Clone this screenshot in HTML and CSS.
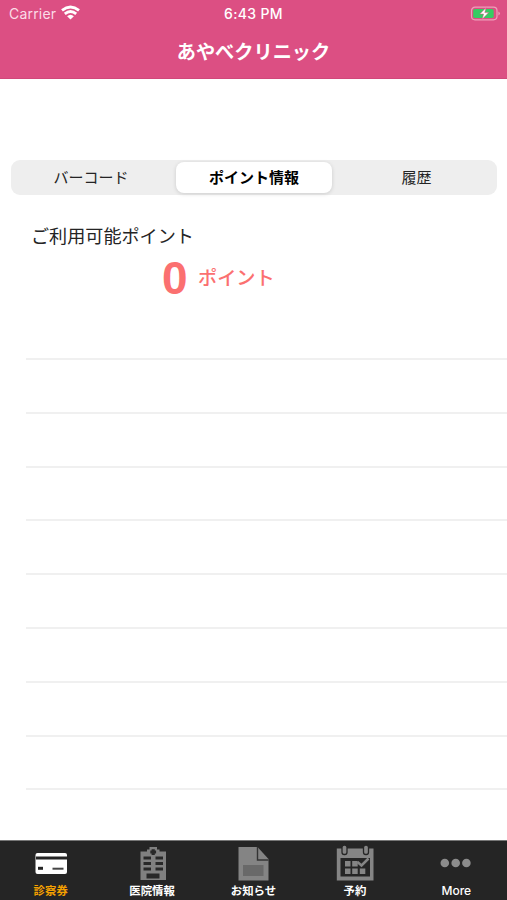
FILE: index.html
```html
<!DOCTYPE html>
<html lang="ja">
<head>
<meta charset="utf-8">
<title>あやべクリニック</title>
<link rel="stylesheet" href="styles.css">
</head>
<body>
<header class="header">
  <div class="status">
    <div class="carrier"><span>Carrier</span>
      <svg class="wifi" width="19" height="15" viewBox="0 0 19 15" fill="none" stroke="#fff" stroke-width="2.8"><path d="M1 5.300Q9.500-1.400 18 5.300M3.800 8.900Q9.500 4.200 15.200 8.900"/><path d="M6.100 11.200Q9.500 8.200 12.900 11.200L9.500 14.500Z" fill="#fff" stroke="none"/></svg>
    </div>
    <div class="time">6:43 PM</div>
    <div class="power">
      <svg width="31" height="15" viewBox="0 0 31 15"><rect x="1.500" y="1.200" width="25.500" height="12.600" rx="3.500" fill="none" stroke="#eda0bb" stroke-width="1.200"/><rect x="3.200" y="3" width="20.500" height="9" rx="1.800" fill="#35cc62"/><path d="M28.400 5.500Q31.500 7.500 28.400 9.500Z" fill="#eda0bb"/><path d="M16 1.800L9.800 8H13.600L12.200 13.200L18.700 6.600H14.800Z" fill="#fff" stroke="#dc4f83" stroke-width=".5"/></svg>
    </div>
  </div>
  <h1 class="title">あやべクリニック</h1>
</header>
<main class="content">
  <nav class="segments">
    <span class="segment first">バーコード</span>
    <span class="segment selected">ポイント情報</span>
    <span class="segment last">履歴</span>
  </nav>
  <section class="points">
    <h2 class="points-label">ご利用可能ポイント</h2>
    <p class="points-value"><strong class="count">0</strong><span class="unit">ポイント</span></p>
  </section>
  <div class="rows">
    <div class="row"></div><div class="row"></div><div class="row"></div><div class="row"></div><div class="row"></div><div class="row"></div><div class="row"></div><div class="row"></div><div class="row"></div>
  </div>
</main>
<footer class="tabs">
  <div class="tab active">
    <svg width="40" height="40" viewBox="0 0 40 40"><rect x="4.500" y="12" width="31.500" height="21" rx="2" fill="#fff"/><path d="M5 17H36" stroke="#252525" stroke-width="3"/><path d="M7 27.300H12" stroke="#252525" stroke-width="3"/><path d="M21.500 27.700H32.500" stroke="#444" stroke-width="2"/></svg>
    <span>診察券</span>
  </div>
  <div class="tab">
    <svg width="40" height="40" viewBox="0 0 40 40"><path d="M8.500 10.500H15V8.500H17.500V6H25V8.500H27.500V10.500H34V39H8.500Z" fill="#808080"/><path d="M21.200 8.200V14M18.300 11H24.100M11.500 17H19M23.500 17H31M11.500 22.500H19M23.500 22.500H31M11.500 28H19M23.500 28H31" stroke="#282828" stroke-width="3.200"/><rect x="14.500" y="32.500" width="13" height="5" fill="#282828"/></svg>
    <span>医院情報</span>
  </div>
  <div class="tab">
    <svg width="40" height="40" viewBox="0 0 40 40"><path d="M5.500 6H24.500L35.500 18V39.500H5.500Z" fill="#848484"/><path d="M24.500 6V19H35.500" fill="none" stroke="#343434" stroke-width="1.400"/><rect x="10" y="24" width="20.500" height="11" fill="#696969"/></svg>
    <span>お知らせ</span>
  </div>
  <div class="tab">
    <svg width="40" height="40" viewBox="0 0 40 40"><path d="M1.800 7.500H38.500V39.500H1.800Z" fill="#858585"/><rect x="5.500" y="17" width="29.500" height="18.500" fill="#252525"/><g stroke="#252525" stroke-width="1.300" fill="#858585"><rect x="7" y="4" width="5" height="9.500" rx="2.300"/><rect x="28.500" y="4" width="5" height="9.500" rx="2.300"/></g><path d="M10 20h5.500v5.500h-5.500zM17.200 20h5.500v5.500h-5.500zM10 27.500h5.500v5.500h-5.500zM17.200 27.500h5.500v5.500h-5.500zM24.800 27.500h5.500v5.500h-5.500z" fill="#858585"/><path d="M22.500 21L26.500 24.500L33.500 17.500" fill="none" stroke="#858585" stroke-width="2.500"/></svg>
    <span>予約</span>
  </div>
  <div class="tab more">
    <svg width="40" height="40" viewBox="0 0 40 40" fill="#8c8c8c"><circle cx="8.800" cy="22" r="4.300"/><circle cx="19.700" cy="22" r="4.300"/><circle cx="30.400" cy="22" r="4.300"/></svg>
    <span>More</span>
  </div>
</footer>
</body>
</html>
```
FILE: styles.css
```css
* { box-sizing: border-box; }
body {
  margin: 0;
  height: 900px;
  display: flex;
  flex-direction: column;
  overflow: hidden;
  background: #fff;
  color: #242424;
  font-family: Inter, "Noto Sans CJK JP", sans-serif;
}
svg { display: block; flex: none; }
.header {
  height: 79px;
  flex: none;
  background: #dc4f83;
  border-bottom: 1px solid #d1487a;
  color: #fff;
}
.status {
  height: 27px;
  display: grid;
  grid-template-columns: 1fr auto 1fr;
  align-items: center;
  padding: 0 6px 0 9px;
  font-size: 14px;
  line-height: 27px;
}
.carrier { display: flex; align-items: center; gap: 5px; color: #fbdce7; letter-spacing: .2px; }
.wifi { margin-top: -2px; }
.time { margin-left: -3px; font-weight: 500; font-size: 14px; letter-spacing: .35px; }
.power { display: flex; justify-content: flex-end; }
.title {
  margin: 0;
  height: 51px;
  line-height: 50px;
  text-align: center;
  font-size: 19.200px;
  font-weight: 700;
}
.content { flex: 1; min-height: 0; padding-top: 81px; }
.segments {
  height: 35px;
  margin: 0 10px 0 11px;
  padding: 2px 3px;
  display: grid;
  grid-template-columns: 161px 157px 1fr;
  background: #eee;
  border-radius: 9px;
}
.segment { text-align: center; font-size: 15px; line-height: 31px; }
.first { padding-right: 7px; }
.last { padding-left: 7px; }
.selected {
  margin-left: 1px;
  background: #fff;
  border-radius: 8px;
  box-shadow: 0 1px 4px rgba(0, 0, 0, .14);
  color: #000;
  font-weight: 700;
}
.points { height: 163px; padding-top: 27px; }
.points-label { margin: 0 0 0 31px; font-size: 18.100px; line-height: 28px; font-weight: 400; }
.points-value {
  display: flex;
  align-items: center;
  height: 56px;
  margin: 0 0 0 162px;
  color: #fb7070;
}
.count { width: 36px; font: 700 46px/56px "Liberation Sans", sans-serif; }
.unit { font-size: 19.200px; line-height: 56px; font-weight: 500; }
.rows { margin-left: 26px; }
.row { height: 53.800px; border-top: 2px solid #f0f0f0; }
.tabs {
  height: 60px;
  flex: none;
  display: grid;
  grid-template-columns: repeat(5, 1fr);
  background: #252525;
  border-top: 1px solid #777;
  color: #fff;
}
.tab { display: flex; flex-direction: column; align-items: center; font-size: 11.400px; font-weight: 700; }
.tab span { line-height: 20px; white-space: nowrap; }
.active { color: #f4a000; }
.more { font-size: 12px; font-weight: 500; }
```
